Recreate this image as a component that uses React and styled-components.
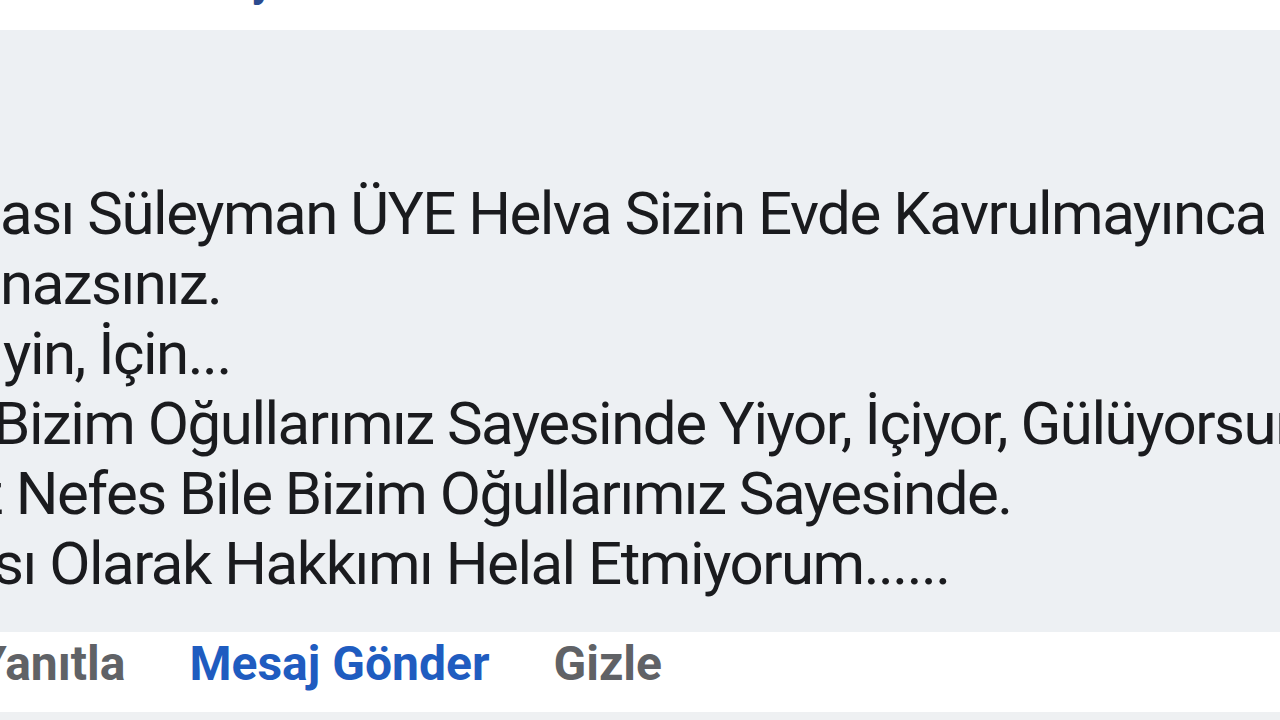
import styled, { createGlobalStyle } from "styled-components";

const GlobalStyle = createGlobalStyle`
  html, body {
    margin: 0;
    padding: 0;
    background: #ffffff;
  }
  body {
    font-family: Roboto, "Liberation Sans", Arial, sans-serif;
  }
`;

const Page = styled.div`
  width: 1280px;
  height: 720px;
  overflow: hidden;
  display: flex;
  flex-direction: column;
  background: #ffffff;
`;

const TopBar = styled.div`
  height: 30px;
  overflow: hidden;
  background: #ffffff;
  padding-left: 157px;
`;

const Name = styled.div`
  margin-top: -41px;
  font-size: 44px;
  line-height: 1;
  font-weight: 700;
  color: #2b4b8f;
  white-space: nowrap;
`;

const Bubble = styled.div`
  height: 602px;
  box-sizing: border-box;
  padding-top: 149px;
  background: #edf0f3;
  overflow: hidden;
`;

const Line = styled.div`
  font-size: 60px;
  line-height: 70px;
  letter-spacing: -1.5px;
  color: #1a1b1e;
  white-space: nowrap;
  text-indent: ${(p) => p.$indent || 0}px;
`;

const Actions = styled.div`
  height: 80px;
  box-sizing: border-box;
  padding-top: 8px;
  display: flex;
  align-items: flex-start;
  gap: 64px;
  background: #ffffff;
  overflow: hidden;
`;

const Action = styled.span`
  font-size: 48px;
  line-height: 48px;
  font-weight: 700;
  color: ${(p) => (p.$primary ? "#1f5cc0" : "#606266")};
  white-space: nowrap;
  margin-left: ${(p) => p.$shift || 0}px;
`;

const BottomEdge = styled.div`
  flex: 1;
  background: #eef0f2;
`;

const lines = [
  { text: "ası Süleyman ÜYE Helva Sizin Evde Kavrulmayınca Bu", indent: 0 },
  { text: "nazsınız.", indent: 0 },
  { text: "yin, İçin...", indent: 3 },
  { text: "Bizim Oğullarımız Sayesinde Yiyor, İçiyor, Gülüyorsunuz", indent: -7 },
  { text: "z Nefes Bile Bizim Oğullarımız Sayesinde.", indent: -26 },
  { text: "sı Olarak Hakkımı Helal Etmiyorum......", indent: -7 },
];

export default function App() {
  return (
    <>
      <GlobalStyle />
      <Page>
        <TopBar>
          <Name>Nuray</Name>
        </TopBar>
        <Bubble>
          {lines.map((l, i) => (
            <Line key={i} $indent={l.indent}>
              {l.text}
            </Line>
          ))}
        </Bubble>
        <Actions>
          <Action $shift={-23}>Yanıtla</Action>
          <Action $primary>Mesaj Gönder</Action>
          <Action>Gizle</Action>
        </Actions>
        <BottomEdge />
      </Page>
    </>
  );
}
